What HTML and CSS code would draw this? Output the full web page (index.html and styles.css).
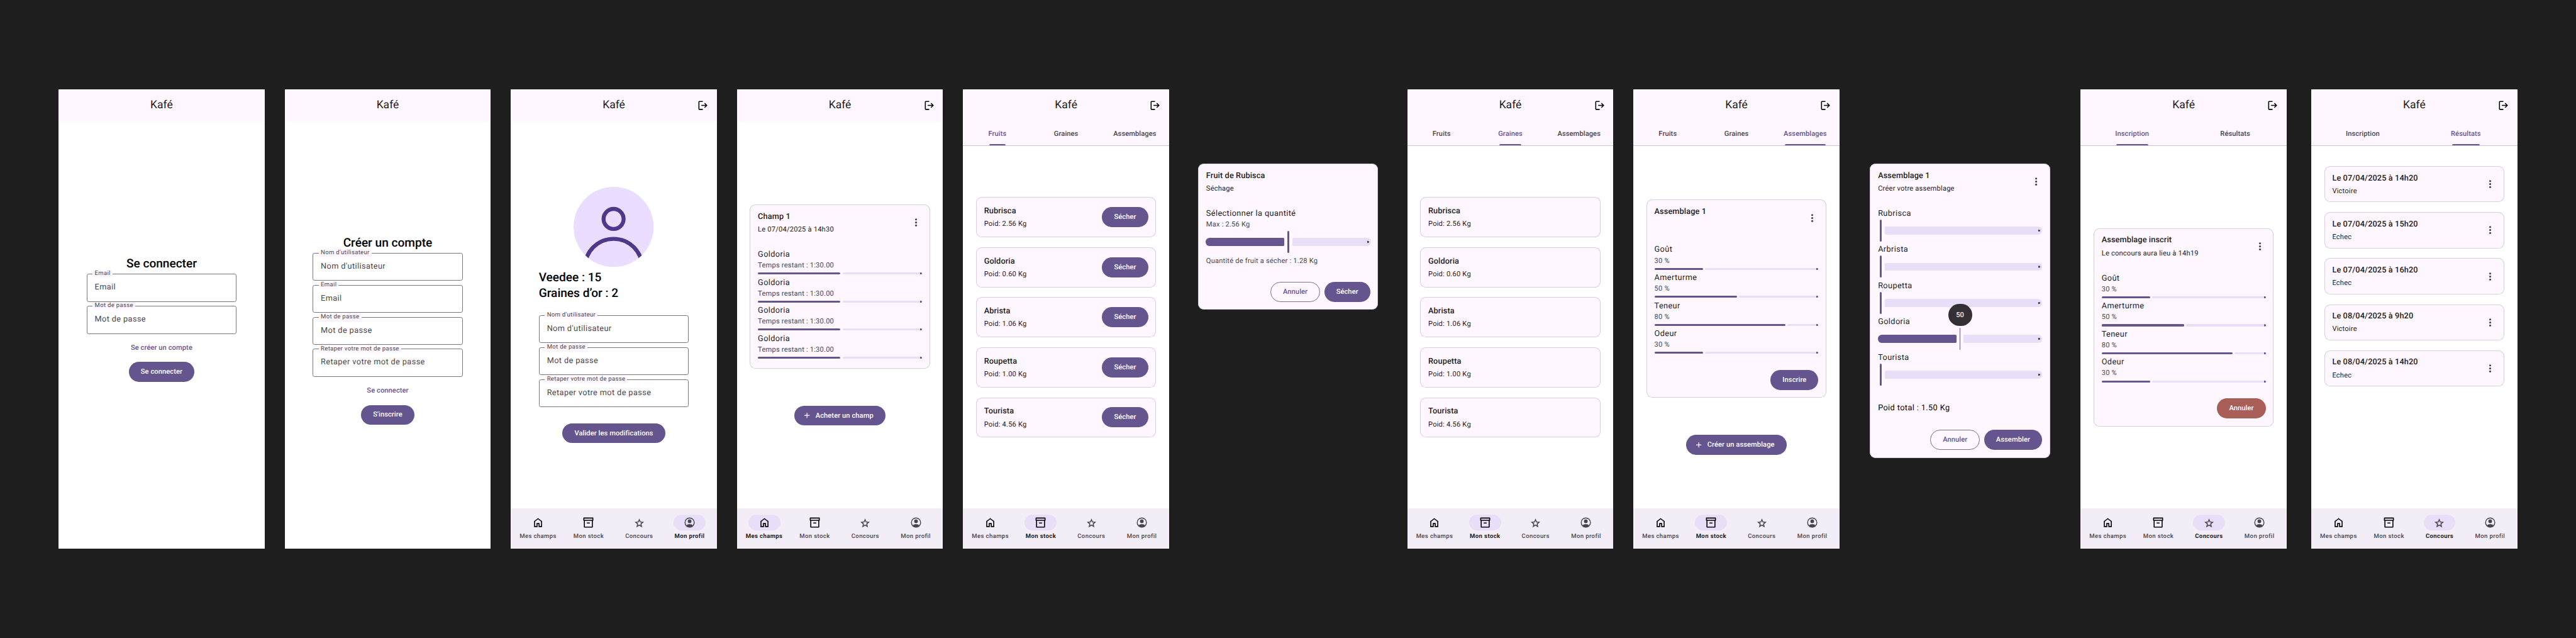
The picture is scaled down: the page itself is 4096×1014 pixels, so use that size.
FILE: index.html
```html
<!DOCTYPE html>
<html lang="fr">
<head>
<meta charset="utf-8">
<title>Kafé</title>
<link rel="stylesheet" href="styles.css">
</head>
<body>
<svg class="sprite" aria-hidden="true">
  <symbol id="i-logout" viewBox="0 0 24 24"><path d="M12 4H5.2Q4.2 4 4.2 5V19Q4.2 20 5.2 20H12M9 12H19.6M15.4 7.6 19.8 12 15.4 16.4" fill="none" stroke="currentColor" stroke-width="2"/></symbol>
  <symbol id="i-home" viewBox="0 -960 960 960"><path d="M240-200h120v-240h240v240h120v-360L480-740 240-560v360Zm-80 80v-480l320-240 320 240v480H520v-240h-80v240H160Z" fill="currentColor"/></symbol>
  <symbol id="i-stock" viewBox="0 0 24 24"><g fill="none" stroke="currentColor" stroke-width="2" stroke-linejoin="round"><rect x="3" y="3" width="18" height="4.5"/><path d="M4 7.5V21H20V7.5M9 12.9H15"/></g></symbol>
  <symbol id="i-star" viewBox="0 0 24 24"><path transform="translate(.63 1.78) scale(.947) translate(0 24) scale(.025)" d="m354-287 126-76 126 77-33-144 111-96-146-13-58-136-58 135-146 13 111 97-33 143ZM233-120l65-281L80-590l288-25 112-265 112 265 288 25-218 189 65 281-247-149-247 149Z" fill="currentColor"/></symbol>
  <symbol id="i-user" viewBox="0 0 24 24"><circle cx="12" cy="12" r="9.2" fill="none" stroke="currentColor" stroke-width="1.8"/><circle cx="12" cy="9.5" r="3.7" fill="currentColor"/><path d="M4.6 18.1Q8 15 12 15T19.4 18.1A9.6 9.6 0 0 1 4.6 18.1Z" fill="currentColor"/></symbol>
  <symbol id="i-more" viewBox="0 0 24 24"><g fill="currentColor"><circle cx="12" cy="6" r="2"/><circle cx="12" cy="12" r="2"/><circle cx="12" cy="18" r="2"/></g></symbol>
  <symbol id="i-plus" viewBox="0 0 24 24"><path d="M12 5V19M5 12H19" stroke="currentColor" stroke-width="2"/></symbol>
</svg>

<main class="board">

  <section class="phone">
    <header class="topbar"><h1>Kafé</h1></header>
    <div class="body body-login">
      <h2 class="headline">Se connecter</h2>
      <div class="fields">
        <div class="field"><span class="field-label">Email</span>Email</div>
        <div class="field"><span class="field-label">Mot de passe</span>Mot de passe</div>
      </div>
      <a class="btn btn-text">Se créer un compte</a>
      <a class="btn">Se connecter</a>
    </div>
  </section>

  <section class="phone">
    <header class="topbar"><h1>Kafé</h1></header>
    <div class="body body-signup">
      <h2 class="headline">Créer un compte</h2>
      <div class="fields">
        <div class="field"><span class="field-label">Nom d'utilisateur</span>Nom d'utilisateur</div>
        <div class="field"><span class="field-label">Email</span>Email</div>
        <div class="field"><span class="field-label">Mot de passe</span>Mot de passe</div>
        <div class="field"><span class="field-label">Retaper votre mot de passe</span>Retaper votre mot de passe</div>
      </div>
      <a class="btn btn-text">Se connecter</a>
      <a class="btn">S'inscrire</a>
    </div>
  </section>

  <section class="phone">
    <header class="topbar"><h1>Kafé</h1><svg class="icon logout"><use href="#i-logout"/></svg></header>
    <div class="body body-center">
      <svg class="avatar" viewBox="0 0 160 160"><clipPath id="disc"><circle cx="80" cy="80" r="80"/></clipPath><circle cx="80" cy="80" r="80" fill="#eaddff"/><g clip-path="url(#disc)" fill="none" stroke="#4f378a" stroke-width="8"><circle cx="80" cy="64" r="20"/><circle cx="80" cy="160.9" r="57.1"/></g></svg>
      <div class="stats">
        <p class="headline">Veedee : 15</p>
        <p class="headline">Graines d’or : 2</p>
      </div>
      <div class="fields">
        <div class="field"><span class="field-label">Nom d'utilisateur</span>Nom d'utilisateur</div>
        <div class="field"><span class="field-label">Mot de passe</span>Mot de passe</div>
        <div class="field"><span class="field-label">Retaper votre mot de passe</span>Retaper votre mot de passe</div>
      </div>
      <a class="btn btn-save">Valider les modifications</a>
    </div>
    <nav class="navbar">
      <a class="nav-item"><span class="pill"><svg class="icon dark"><use href="#i-home"/></svg></span>Mes champs</a>
      <a class="nav-item"><span class="pill"><svg class="icon dark"><use href="#i-stock"/></svg></span>Mon stock</a>
      <a class="nav-item"><span class="pill"><svg class="icon"><use href="#i-star"/></svg></span>Concours</a>
      <a class="nav-item active"><span class="pill"><svg class="icon"><use href="#i-user"/></svg></span>Mon profil</a>
    </nav>
  </section>

  <section class="phone">
    <header class="topbar"><h1>Kafé</h1><svg class="icon logout"><use href="#i-logout"/></svg></header>
    <div class="body body-center">
      <article class="card">
        <div class="card-head"><div><h3>Champ 1</h3><p>Le 07/04/2025 à 14h30</p></div><svg class="icon more"><use href="#i-more"/></svg></div>
        <div class="card-content">
          <div class="meter"><b>Goldoria</b><span>Temps restant : 1:30.00</span><div class="bar"><i style="width:165px"></i></div></div>
          <div class="meter"><b>Goldoria</b><span>Temps restant : 1:30.00</span><div class="bar"><i style="width:165px"></i></div></div>
          <div class="meter"><b>Goldoria</b><span>Temps restant : 1:30.00</span><div class="bar"><i style="width:165px"></i></div></div>
          <div class="meter"><b>Goldoria</b><span>Temps restant : 1:30.00</span><div class="bar"><i style="width:165px"></i></div></div>
        </div>
      </article>
      <a class="btn btn-icon"><svg><use href="#i-plus"/></svg>Acheter un champ</a>
    </div>
    <nav class="navbar">
      <a class="nav-item active"><span class="pill"><svg class="icon dark"><use href="#i-home"/></svg></span>Mes champs</a>
      <a class="nav-item"><span class="pill"><svg class="icon dark"><use href="#i-stock"/></svg></span>Mon stock</a>
      <a class="nav-item"><span class="pill"><svg class="icon"><use href="#i-star"/></svg></span>Concours</a>
      <a class="nav-item"><span class="pill"><svg class="icon"><use href="#i-user"/></svg></span>Mon profil</a>
    </nav>
  </section>

  <section class="phone">
    <header class="topbar"><h1>Kafé</h1><svg class="icon logout"><use href="#i-logout"/></svg></header>
    <div class="tabs"><a class="active"><span>Fruits</span></a><a><span>Graines</span></a><a><span>Assemblages</span></a></div>
    <div class="body body-stock">
      <article class="card item"><div><h3>Rubrisca</h3><p>Poid: 2.56 Kg</p></div><a class="btn">Sécher</a></article>
      <article class="card item"><div><h3>Goldoria</h3><p>Poid: 0.60 Kg</p></div><a class="btn">Sécher</a></article>
      <article class="card item"><div><h3>Abrista</h3><p>Poid: 1.06 Kg</p></div><a class="btn">Sécher</a></article>
      <article class="card item"><div><h3>Roupetta</h3><p>Poid: 1.00 Kg</p></div><a class="btn">Sécher</a></article>
      <article class="card item"><div><h3>Tourista</h3><p>Poid: 4.56 Kg</p></div><a class="btn">Sécher</a></article>
    </div>
    <nav class="navbar">
      <a class="nav-item"><span class="pill"><svg class="icon dark"><use href="#i-home"/></svg></span>Mes champs</a>
      <a class="nav-item active"><span class="pill"><svg class="icon dark"><use href="#i-stock"/></svg></span>Mon stock</a>
      <a class="nav-item"><span class="pill"><svg class="icon"><use href="#i-star"/></svg></span>Concours</a>
      <a class="nav-item"><span class="pill"><svg class="icon"><use href="#i-user"/></svg></span>Mon profil</a>
    </nav>
  </section>

  <article class="card dialog dialog-dry">
    <div class="card-head"><div><h3>Fruit de Rubisca</h3><p>Séchage</p></div></div>
    <div class="card-content">
      <div class="meter"><b>Sélectionner la quantité</b><span>Max : 2.56 Kg</span></div>
      <div class="slider"><i class="track on"></i><i class="handle"></i><i class="track off"></i></div>
      <p class="hint">Quantité de fruit a sécher : 1.28 Kg</p>
      <div class="actions"><a class="btn btn-outline">Annuler</a><a class="btn">Sécher</a></div>
    </div>
  </article>

  <section class="phone">
    <header class="topbar"><h1>Kafé</h1><svg class="icon logout"><use href="#i-logout"/></svg></header>
    <div class="tabs"><a><span>Fruits</span></a><a class="active"><span>Graines</span></a><a><span>Assemblages</span></a></div>
    <div class="body body-stock">
      <article class="card item"><div><h3>Rubrisca</h3><p>Poid: 2.56 Kg</p></div></article>
      <article class="card item"><div><h3>Goldoria</h3><p>Poid: 0.60 Kg</p></div></article>
      <article class="card item"><div><h3>Abrista</h3><p>Poid: 1.06 Kg</p></div></article>
      <article class="card item"><div><h3>Roupetta</h3><p>Poid: 1.00 Kg</p></div></article>
      <article class="card item"><div><h3>Tourista</h3><p>Poid: 4.56 Kg</p></div></article>
    </div>
    <nav class="navbar">
      <a class="nav-item"><span class="pill"><svg class="icon dark"><use href="#i-home"/></svg></span>Mes champs</a>
      <a class="nav-item active"><span class="pill"><svg class="icon dark"><use href="#i-stock"/></svg></span>Mon stock</a>
      <a class="nav-item"><span class="pill"><svg class="icon"><use href="#i-star"/></svg></span>Concours</a>
      <a class="nav-item"><span class="pill"><svg class="icon"><use href="#i-user"/></svg></span>Mon profil</a>
    </nav>
  </section>

  <section class="phone">
    <header class="topbar"><h1>Kafé</h1><svg class="icon logout"><use href="#i-logout"/></svg></header>
    <div class="tabs"><a><span>Fruits</span></a><a><span>Graines</span></a><a class="active"><span>Assemblages</span></a></div>
    <div class="body body-center">
      <article class="card">
        <div class="card-head"><div><h3>Assemblage 1</h3></div><svg class="icon more"><use href="#i-more"/></svg></div>
        <div class="card-content">
          <div class="meter"><b>Goût</b><span>30 %</span><div class="bar"><i style="width:97px"></i></div></div>
          <div class="meter"><b>Amerturme</b><span>50 %</span><div class="bar"><i style="width:165px"></i></div></div>
          <div class="meter"><b>Teneur</b><span>80 %</span><div class="bar"><i style="width:262px"></i></div></div>
          <div class="meter"><b>Odeur</b><span>30 %</span><div class="bar"><i style="width:97px"></i></div></div>
          <div class="actions"><a class="btn">Inscrire</a></div>
        </div>
      </article>
      <a class="btn btn-icon"><svg><use href="#i-plus"/></svg>Créer un assemblage</a>
    </div>
    <nav class="navbar">
      <a class="nav-item"><span class="pill"><svg class="icon dark"><use href="#i-home"/></svg></span>Mes champs</a>
      <a class="nav-item active"><span class="pill"><svg class="icon dark"><use href="#i-stock"/></svg></span>Mon stock</a>
      <a class="nav-item"><span class="pill"><svg class="icon"><use href="#i-star"/></svg></span>Concours</a>
      <a class="nav-item"><span class="pill"><svg class="icon"><use href="#i-user"/></svg></span>Mon profil</a>
    </nav>
  </section>

  <article class="card dialog dialog-mix">
    <div class="card-head"><div><h3>Assemblage 1</h3><p>Créer votre assemblage</p></div><svg class="icon more"><use href="#i-more"/></svg></div>
    <div class="card-content">
      <div class="mix"><b>Rubrisca</b><div class="slider zero"><i class="handle"></i><i class="track off"></i></div></div>
      <div class="mix"><b>Arbrista</b><div class="slider zero"><i class="handle"></i><i class="track off"></i></div></div>
      <div class="mix"><b>Roupetta</b><div class="slider zero"><i class="handle"></i><i class="track off"></i></div></div>
      <div class="mix"><b>Goldoria</b><div class="slider"><i class="track on"></i><i class="handle pressed"><span class="value">50</span></i><i class="track off"></i></div></div>
      <div class="mix"><b>Tourista</b><div class="slider zero"><i class="handle"></i><i class="track off"></i></div></div>
      <p class="total">Poid total : 1.50 Kg</p>
      <div class="actions"><a class="btn btn-outline">Annuler</a><a class="btn">Assembler</a></div>
    </div>
  </article>

  <section class="phone">
    <header class="topbar"><h1>Kafé</h1><svg class="icon logout"><use href="#i-logout"/></svg></header>
    <div class="tabs"><a class="active"><span>Inscription</span></a><a><span>Résultats</span></a></div>
    <div class="body body-center">
      <article class="card">
        <div class="card-head"><div><h3>Assemblage inscrit</h3><p>Le concours aura lieu à 14h19</p></div><svg class="icon more"><use href="#i-more"/></svg></div>
        <div class="card-content">
          <div class="meter"><b>Goût</b><span>30 %</span><div class="bar"><i style="width:97px"></i></div></div>
          <div class="meter"><b>Amerturme</b><span>50 %</span><div class="bar"><i style="width:165px"></i></div></div>
          <div class="meter"><b>Teneur</b><span>80 %</span><div class="bar"><i style="width:262px"></i></div></div>
          <div class="meter"><b>Odeur</b><span>30 %</span><div class="bar"><i style="width:97px"></i></div></div>
          <div class="actions"><a class="btn btn-danger">Annuler</a></div>
        </div>
      </article>
    </div>
    <nav class="navbar">
      <a class="nav-item"><span class="pill"><svg class="icon dark"><use href="#i-home"/></svg></span>Mes champs</a>
      <a class="nav-item"><span class="pill"><svg class="icon dark"><use href="#i-stock"/></svg></span>Mon stock</a>
      <a class="nav-item active"><span class="pill"><svg class="icon"><use href="#i-star"/></svg></span>Concours</a>
      <a class="nav-item"><span class="pill"><svg class="icon"><use href="#i-user"/></svg></span>Mon profil</a>
    </nav>
  </section>

  <section class="phone phone-last">
    <header class="topbar"><h1>Kafé</h1><svg class="icon logout"><use href="#i-logout"/></svg></header>
    <div class="tabs"><a><span>Inscription</span></a><a class="active"><span>Résultats</span></a></div>
    <div class="body body-results">
      <article class="card"><div class="card-head"><div><h3>Le 07/04/2025 à 14h20</h3><p>Victoire</p></div><svg class="icon more"><use href="#i-more"/></svg></div></article>
      <article class="card"><div class="card-head"><div><h3>Le 07/04/2025 à 15h20</h3><p>Echec</p></div><svg class="icon more"><use href="#i-more"/></svg></div></article>
      <article class="card"><div class="card-head"><div><h3>Le 07/04/2025 à 16h20</h3><p>Echec</p></div><svg class="icon more"><use href="#i-more"/></svg></div></article>
      <article class="card"><div class="card-head"><div><h3>Le 08/04/2025 à 9h20</h3><p>Victoire</p></div><svg class="icon more"><use href="#i-more"/></svg></div></article>
      <article class="card"><div class="card-head"><div><h3>Le 08/04/2025 à 14h20</h3><p>Echec</p></div><svg class="icon more"><use href="#i-more"/></svg></div></article>
    </div>
    <nav class="navbar">
      <a class="nav-item"><span class="pill"><svg class="icon dark"><use href="#i-home"/></svg></span>Mes champs</a>
      <a class="nav-item"><span class="pill"><svg class="icon dark"><use href="#i-stock"/></svg></span>Mon stock</a>
      <a class="nav-item active"><span class="pill"><svg class="icon"><use href="#i-star"/></svg></span>Concours</a>
      <a class="nav-item"><span class="pill"><svg class="icon"><use href="#i-user"/></svg></span>Mon profil</a>
    </nav>
  </section>

</main>
</body>
</html>
```
FILE: styles.css
```css
:root {
  --primary: #65558f;
  --surface: #fef7ff;
  --on-surface: #1d1b20;
  --variant: #49454f;
  --outline: #79747e;
  --outline-soft: #cac4d0;
  --secondary: #e8def8;
}

* { box-sizing: border-box; margin: 0; padding: 0; }

html { background: #1e1e1e; overflow: hidden; }

body {
  background: #1e1e1e;
  font-family: Roboto, "Liberation Sans", sans-serif;
  color: var(--on-surface);
  text-rendering: geometricPrecision;
  white-space: nowrap;
}

.sprite { display: none; }

.board {
  zoom: 0.7955;
  display: flex;
  align-items: flex-start;
  gap: 40px;
  padding: 179px 0 0 117px;
}

/* Phone frame */
.phone {
  flex: none;
  display: flex;
  flex-direction: column;
  width: 412px;
  height: 917px;
  background: #fff;
}

.phone-last { margin-left: 9px; }

.topbar {
  flex: none;
  display: grid;
  grid-template-columns: 1fr auto 1fr;
  height: 64px;
  padding: 16px 16px 0;
  background: var(--surface);
}

.topbar h1 {
  grid-column: 2;
  padding-top: 1px;
  font-size: 22px;
  line-height: 28px;
  font-weight: 400;
}

.icon { display: block; width: 24px; height: 24px; }

.logout { justify-self: end; margin-top: 4px; color: #000; }

.tabs {
  flex: none;
  display: flex;
  height: 49px;
  background: var(--surface);
  border-bottom: 1px solid var(--outline-soft);
}

.tabs a {
  flex: 1;
  display: flex;
  justify-content: center;
  font-size: 14px;
  line-height: 20px;
  font-weight: 500;
  letter-spacing: 0.1px;
  color: var(--variant);
}

.tabs span { position: relative; height: 48px; padding-top: 14.6px; }

.tabs .active { color: var(--primary); }

.tabs .active span::after {
  content: "";
  position: absolute;
  left: 2px;
  right: 2px;
  bottom: 0;
  height: 3px;
  border-radius: 3px 3px 0 0;
  background: var(--primary);
}

.body {
  flex: 1;
  display: flex;
  flex-direction: column;
  align-items: center;
}

.body-login { padding-top: 268px; }
.body-signup { padding-top: 226px; }
.body-center { justify-content: center; }
.body-stock { padding-top: 102px; gap: 20px; }
.body-results { padding-top: 40px; gap: 20px; }

.headline {
  font-size: 24px;
  line-height: 32px;
  font-weight: 500;
  color: #000;
}

/* Bottom navigation */
.navbar {
  flex: none;
  display: flex;
  gap: 8px;
  height: 80px;
  padding: 12px 8px 0;
  background: #f3edf7;
}

.nav-item {
  flex: 1;
  display: flex;
  flex-direction: column;
  align-items: center;
  gap: 4.6px;
  font-size: 12px;
  line-height: 16px;
  font-weight: 500;
  letter-spacing: 0.5px;
  color: var(--variant);
}

.nav-item.active { font-weight: 700; color: var(--on-surface); }

.pill {
  display: flex;
  align-items: center;
  justify-content: center;
  width: 64px;
  height: 32px;
  border-radius: 16px;
  color: var(--variant);
}

.active .pill { background: var(--secondary); }

.pill .dark { color: #000; }

/* Forms */
.fields {
  display: flex;
  flex-direction: column;
  gap: 8px;
  width: 300px;
  margin: 4px 0 8px;
}

.field {
  position: relative;
  height: 56px;
  padding: 0 15px;
  border: 1px solid var(--outline);
  border-radius: 4px;
  font-size: 16px;
  line-height: 54px;
  letter-spacing: 0.5px;
  color: var(--variant);
}

.field-label {
  position: absolute;
  left: 11px;
  top: -8.5px;
  padding: 0 4px;
  background: var(--surface);
  font-size: 12px;
  line-height: 16px;
  letter-spacing: 0.4px;
}

.avatar { display: block; width: 160px; height: 160px; }

.stats { width: 300px; margin: 4.5px 0 23.5px; }

.btn {
  flex: none;
  display: flex;
  align-items: center;
  justify-content: center;
  height: 40px;
  padding: 0 24px;
  border-radius: 20px;
  background: var(--primary);
  font-size: 14px;
  line-height: 20px;
  font-weight: 500;
  letter-spacing: 0.1px;
  color: #fff;
}

.btn-text { background: none; color: var(--primary); margin-bottom: 8px; }
.btn-outline { background: none; border: 1px solid var(--outline); color: var(--primary); }
.btn-danger { background: #a95e58; }
.btn-save { margin-top: 24px; }
.btn-icon { gap: 8px; padding-left: 16px; margin-top: 74px; }
.btn-icon svg { width: 18px; height: 18px; }

/* Cards */
.card {
  flex: none;
  width: 360px;
  border-radius: 12px;
  background: var(--surface);
  box-shadow: inset 0 0 0 1px var(--outline-soft);
}

.card h3 {
  font-size: 16px;
  line-height: 24px;
  font-weight: 500;
  letter-spacing: 0.15px;
}

.card-head p, .item p {
  margin-top: 4px;
  font-size: 14px;
  line-height: 20px;
  letter-spacing: 0.25px;
}

.card-head {
  display: flex;
  justify-content: space-between;
  height: 72px;
  padding: 12px 16px;
}

.more { align-self: center; color: var(--variant); }

.item {
  display: flex;
  align-items: center;
  justify-content: space-between;
  height: 80px;
  padding: 0 16px;
}

.card-content { padding: 16px; }

.meter b, .mix b {
  display: block;
  font-size: 16px;
  line-height: 24px;
  font-weight: 400;
  letter-spacing: 0.5px;
}

.meter span, .hint {
  display: block;
  font-size: 14px;
  line-height: 20px;
  letter-spacing: 0.25px;
  color: var(--variant);
}

.bar {
  display: flex;
  gap: 4px;
  height: 4px;
  margin: 4px 0;
}

.bar i { flex: none; border-radius: 2px; background: var(--primary); }

.bar::after {
  content: "";
  flex: 1;
  border-radius: 2px;
  background: radial-gradient(circle at calc(100% - 2px) 50%, var(--primary) 2px, transparent 2.3px) var(--secondary);
}

.actions {
  display: flex;
  justify-content: flex-end;
  gap: 8px;
  margin-top: 32px;
}

/* Sliders and dialogs */
.slider { display: flex; align-items: center; gap: 6px; height: 44px; }

.track { flex: 1; height: 16px; }
.track.on { background: var(--primary); border-radius: 8px 2px 2px 8px; }
.track.off {
  border-radius: 2px 8px 8px 2px;
  background: radial-gradient(circle at calc(100% - 6px) 50%, var(--variant) 1.8px, transparent 2.3px) var(--secondary);
}

.handle {
  position: relative;
  flex: none;
  width: 4px;
  height: 44px;
  border-radius: 2px;
  background: var(--primary);
  font-style: normal;
}

.handle.pressed { width: 2px; }

.zero { padding-left: 4px; }

.value {
  position: absolute;
  left: -23px;
  bottom: 48px;
  width: 48px;
  height: 44px;
  border-radius: 22px;
  background: #322f35;
  font-size: 14px;
  line-height: 44px;
  font-weight: 500;
  letter-spacing: 0.1px;
  text-align: center;
  color: #f5eff7;
}

.dialog { margin: 148px 18px 0; }

.dialog-mix { margin: 148px 21px 0; }

.dialog-dry .slider { margin: 2px -1px 7px; }
.dialog-dry .actions { margin-top: 31px; }

.mix { height: 72px; }

.total {
  margin-top: 28px;
  font-size: 16px;
  line-height: 24px;
  letter-spacing: 0.5px;
  color: #000;
}
```
